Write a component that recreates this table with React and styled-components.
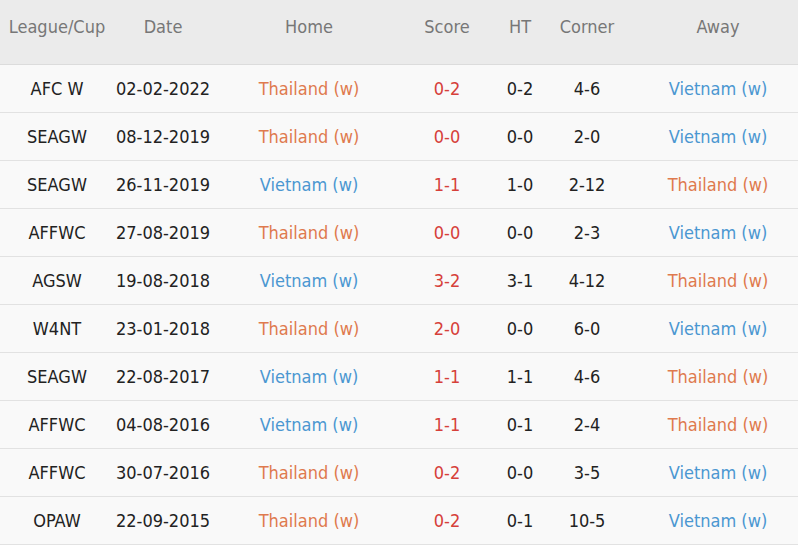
import React from 'react'
import styled, { createGlobalStyle } from 'styled-components'

const GlobalStyle = createGlobalStyle`
    html, body { margin: 0; padding: 0; background: #fff; }
    body {
        width: 798px;
        height: 549px;
        overflow: hidden;
        font-family: "DejaVu Sans Condensed", "DejaVu Sans", sans-serif;
        font-size: 18px;
    }
`

const Table = styled.table`
    border-collapse: collapse;
    table-layout: fixed;
    width: 814px;
    background: #f9f9f9;
`
const HeadCell = styled.th`
    width: ${p => p.w}px;
    height: 52px;
    padding: 0 0 12px;
    background: #ebebeb;
    color: #777;
    font-weight: normal;
    text-align: center;
    vertical-align: middle;
    border-bottom: 1px solid #dcdcdc;
`
const Row = styled.tr`
    height: 48px;
    border-bottom: 1px solid #e2e2e2;
`
const Cell = styled.td`
    padding: 0;
    text-align: center;
    vertical-align: middle;
    color: ${p => p.tone || '#222'};
    white-space: nowrap;
`

const ORANGE = '#df7a4e'
const BLUE = '#4b97d1'
const RED = '#d6403a'

const columns = [
    ['League/Cup', 114],
    ['Date', 98],
    ['Home', 194],
    ['Score', 82],
    ['HT', 64],
    ['Corner', 70],
    ['Away', 192],
]

const TH = 'Thailand (w)'
const VN = 'Vietnam (w)'

const matches = [
    ['AFC W', '02-02-2022', TH, '0-2', '0-2', '4-6', VN],
    ['SEAGW', '08-12-2019', TH, '0-0', '0-0', '2-0', VN],
    ['SEAGW', '26-11-2019', VN, '1-1', '1-0', '2-12', TH],
    ['AFFWC', '27-08-2019', TH, '0-0', '0-0', '2-3', VN],
    ['AGSW', '19-08-2018', VN, '3-2', '3-1', '4-12', TH],
    ['W4NT', '23-01-2018', TH, '2-0', '0-0', '6-0', VN],
    ['SEAGW', '22-08-2017', VN, '1-1', '1-1', '4-6', TH],
    ['AFFWC', '04-08-2016', VN, '1-1', '0-1', '2-4', TH],
    ['AFFWC', '30-07-2016', TH, '0-2', '0-0', '3-5', VN],
    ['OPAW', '22-09-2015', TH, '0-2', '0-1', '10-5', VN],
]

const teamTone = name => (name === TH ? ORANGE : BLUE)

export default function App() {
    return (
        <>
            <GlobalStyle />
            <Table>
                <thead>
                    <tr>
                        {columns.map(([label, w]) => (
                            <HeadCell key={label} w={w}>{label}</HeadCell>
                        ))}
                    </tr>
                </thead>
                <tbody>
                    {matches.map((m, i) => (
                        <Row key={i}>
                            <Cell>{m[0]}</Cell>
                            <Cell>{m[1]}</Cell>
                            <Cell tone={teamTone(m[2])}>{m[2]}</Cell>
                            <Cell tone={RED}>{m[3]}</Cell>
                            <Cell>{m[4]}</Cell>
                            <Cell>{m[5]}</Cell>
                            <Cell tone={teamTone(m[6])}>{m[6]}</Cell>
                        </Row>
                    ))}
                </tbody>
            </Table>
        </>
    )
}
